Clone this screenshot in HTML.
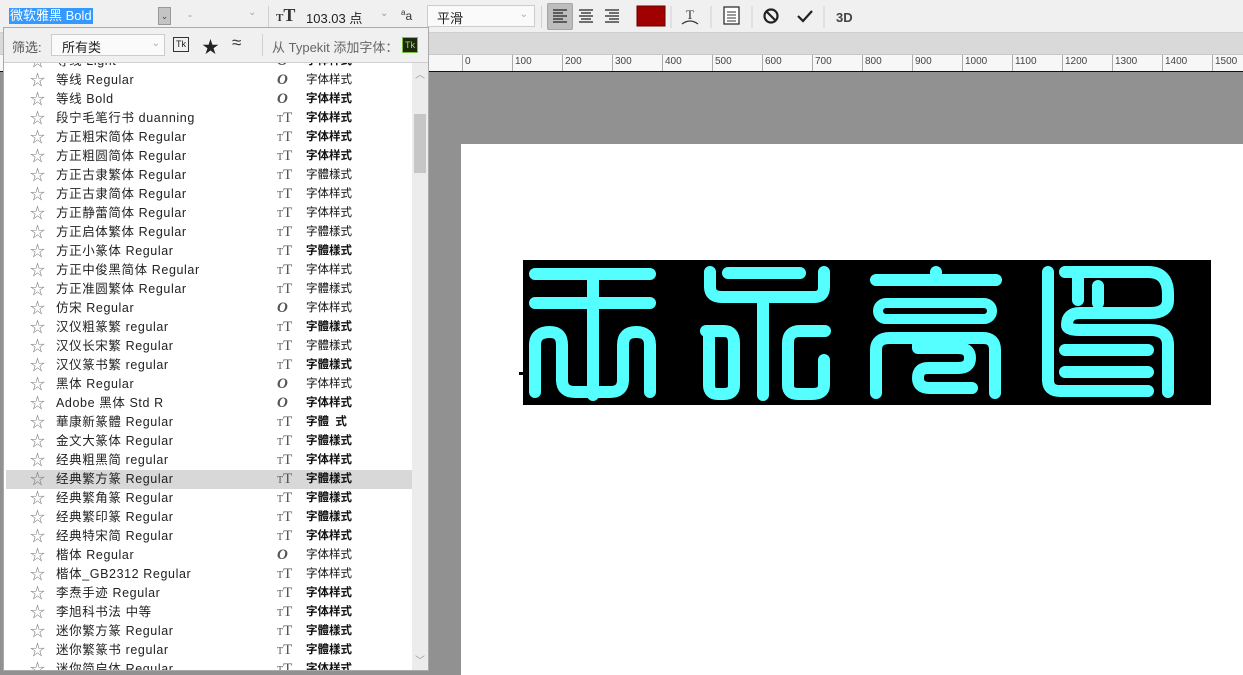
<!DOCTYPE html>
<html><head><meta charset="utf-8">
<style>
*{margin:0;padding:0;box-sizing:border-box}
body{width:1243px;height:675px;overflow:hidden;position:relative;background:#919191;font-family:"Liberation Sans","Noto Sans CJK SC",sans-serif;font-size:12px;color:#222}
.abs{position:absolute}
#tb{left:0;top:0;width:1243px;height:33px;background:#f0f0f0;border-bottom:1px solid #cfcfcf}
#band{left:0;top:33px;width:1243px;height:22px;background:#d9d9d9;border-bottom:1px solid #c8c8c8}
#ruler{left:0;top:55px;width:1243px;height:17px;background:#f7f7f7;border-bottom:1px solid #111}
.tick{position:absolute;top:0;width:1px;height:16px;background:#aaa}
.rl{position:absolute;top:1px;font-size:10px;color:#444}
#doc{left:461px;top:144px;width:782px;height:531px;background:#fff}
#panel{left:3px;top:27px;width:426px;height:644px;background:#fff;border:1px solid #aaa}
#filter{left:0;top:0;width:424px;height:35px;background:#f0f0f0;border-bottom:1px solid #d0d0d0}
#list{position:absolute;left:0;top:35px;width:424px;height:607px;overflow:hidden}
.row{position:relative;left:2px;width:406px;height:19px;line-height:19px;font-size:12.5px;color:#222}
.row .st{position:absolute;left:24px;top:0;color:#777;font-size:15px}
.row .nm{position:absolute;left:50px;top:0;white-space:nowrap;letter-spacing:0.6px}
.row .ic{position:absolute;left:271px;top:0;font-family:"Liberation Serif",serif;font-size:15px;color:#555}
.row .ic i{font-weight:bold}
.row .ic s{text-decoration:none;font-size:10px}
.row .sm{position:absolute;left:300px;top:0;font-size:11.5px;font-weight:bold;color:#111}
.sel{background:#d8d8d8}
</style></head><body>
<div id="tb" class="abs">
 <div class="abs" style="left:9px;top:8px;background:#3399ff;color:#fff;font-size:13px;line-height:16px;padding:0 1px">微软雅黑 Bold</div>
 <div class="abs" style="left:158px;top:7px;width:13px;height:18px;background:#c4c4c4;border:1px solid #999;font-size:9px;text-align:center;line-height:16px;color:#444">⌄</div>
 <div class="abs" style="left:188px;top:8px;color:#999">-</div>
 <div class="abs" style="left:248px;top:7px;color:#aaa;font-size:10px">⌄</div>
 <div class="abs" style="left:268px;top:6px;width:1px;height:22px;background:#d0d0d0"></div>
 <div class="abs" style="left:276px;top:5px;font-family:'Liberation Serif',serif;font-size:18px;font-weight:bold;color:#333"><span style="font-size:11px">T</span>T</div>
 <div class="abs" style="left:306px;top:8px;font-size:13px">103.03 点</div>
 <div class="abs" style="left:380px;top:8px;color:#999;font-size:10px">⌄</div>
 <div class="abs" style="left:401px;top:8px;font-size:12px;color:#333"><sup style="font-size:8px">a</sup>a</div>
 <div class="abs" style="left:427px;top:5px;width:108px;height:22px;background:#fafafa;border:1px solid #ccc;font-size:13px;padding:2px 0 0 9px">平滑<span style="position:absolute;right:6px;top:3px;color:#aaa;font-size:10px">⌄</span></div>
 <div class="abs" style="left:541px;top:6px;width:1px;height:22px;background:#d0d0d0"></div>
 <div class="abs" style="left:547px;top:3px;width:26px;height:27px;background:#bdbdbd;border:1px solid #a5a5a5;border-radius:2px"></div>
 <svg class="abs" style="left:0;top:0" width="1243" height="33">
  <g stroke="#222" stroke-width="1.2">
   <path d="M553 10h14M553 13h10M553 16h14M553 19h10M553 22h14"/>
   <path d="M579 10h14M581 13h10M579 16h14M581 19h10M579 22h14"/>
   <path d="M605 10h14M609 13h10M605 16h14M609 19h10M605 22h14"/>
  </g>
  <rect x="637" y="6" width="28" height="20" fill="#a00000" stroke="#600" />
  <line x1="671" y1="6" x2="671" y2="28" stroke="#d0d0d0"/>
  <text x="686" y="19" font-family="Liberation Serif" font-size="13" fill="#333">T</text>
  <path d="M682 24 q8 -6 16 0" stroke="#333" fill="none" stroke-width="1.2"/>
  <line x1="711" y1="6" x2="711" y2="28" stroke="#d0d0d0"/>
  <rect x="724" y="7" width="15" height="17" fill="#fff" stroke="#333" stroke-width="1.3"/>
  <path d="M727 12h9M727 15h9M727 18h9M727 21h9" stroke="#333"/>
  <line x1="752" y1="6" x2="752" y2="28" stroke="#d0d0d0"/>
  <circle cx="771" cy="16" r="6.5" fill="none" stroke="#222" stroke-width="2.2"/>
  <path d="M766 11l10 10" stroke="#222" stroke-width="2.2"/>
  <path d="M798 16l5 5 9-10" stroke="#222" stroke-width="2.2" fill="none"/>
  <line x1="824" y1="6" x2="824" y2="28" stroke="#d0d0d0"/>
  <text x="836" y="22" font-family="Liberation Sans" font-weight="bold" font-size="13" fill="#444">3D</text>
 </svg>
</div>
<div id="band" class="abs"></div>
<div id="ruler" class="abs">
 <div class="tick" style="left:462px"></div><div class="rl" style="left:465px">0</div>
 <div class="tick" style="left:512px"></div><div class="rl" style="left:515px">100</div>
 <div class="tick" style="left:562px"></div><div class="rl" style="left:565px">200</div>
 <div class="tick" style="left:612px"></div><div class="rl" style="left:615px">300</div>
 <div class="tick" style="left:662px"></div><div class="rl" style="left:665px">400</div>
 <div class="tick" style="left:712px"></div><div class="rl" style="left:715px">500</div>
 <div class="tick" style="left:762px"></div><div class="rl" style="left:765px">600</div>
 <div class="tick" style="left:812px"></div><div class="rl" style="left:815px">700</div>
 <div class="tick" style="left:862px"></div><div class="rl" style="left:865px">800</div>
 <div class="tick" style="left:912px"></div><div class="rl" style="left:915px">900</div>
 <div class="tick" style="left:962px"></div><div class="rl" style="left:965px">1000</div>
 <div class="tick" style="left:1012px"></div><div class="rl" style="left:1015px">1100</div>
 <div class="tick" style="left:1062px"></div><div class="rl" style="left:1065px">1200</div>
 <div class="tick" style="left:1112px"></div><div class="rl" style="left:1115px">1300</div>
 <div class="tick" style="left:1162px"></div><div class="rl" style="left:1165px">1400</div>
 <div class="tick" style="left:1212px"></div><div class="rl" style="left:1215px">1500</div>
</div>
<div id="doc" class="abs"></div>
<svg class="abs" style="left:0;top:0" width="1243" height="675">
 <rect x="523" y="260" width="688" height="145" fill="#000"/>
 <rect x="519" y="372" width="4" height="3" fill="#000"/>
 <g stroke="#55ffff" stroke-width="12" stroke-linecap="round" stroke-linejoin="round" fill="none">
  <path d="M535 274H650M535 303H650M593 274V330"/>
  <path d="M535 392V345Q535 332 550 332Q562 332 562 345V380Q562 392 575 392H610Q623 392 623 380V345Q623 332 636 332Q650 332 650 345V392"/>
  <path d="M593 332V395"/>
  <path d="M710 272V287Q710 297 722 297H814Q824 297 824 287V272M728 273H800M763 297V395"/>
  <path d="M706 331H724Q734 331 734 343V385Q734 394 724 394H718Q709 394 709 385V331"/>
  <path d="M825 331H800Q788 331 788 343V385Q788 394 798 394H812Q824 394 824 385V360"/>
  <path d="M876 280H996M936 272V280"/>
  <path d="M876 393V350Q876 338 890 338H983Q995 338 995 350V393"/>
  <path d="M918 338V348H958Q970 348 970 358Q970 368 958 368H928Q918 368 918 378Q918 388 930 388H972"/>
  <path d="M1048 272V380Q1048 391 1060 391H1148"/>
  <path d="M1065 272H1148Q1168 272 1168 294V300Q1168 313 1150 313H1080Q1067 313 1067 325Q1067 330 1080 330H1150Q1168 330 1168 345V392"/>
  <path d="M1078 272V300M1098 286V303M1065 350H1148M1065 372H1148"/>
 </g>
 <rect x="878" y="303" width="114" height="16" rx="8" fill="none" stroke="#55ffff" stroke-width="10"/>
 <path d="M328 488l12 8-6 2 4 6-3 1-3-6-4 4z" fill="#4a90d9" stroke="#fff" stroke-width="0.5"/>
</svg>

<div id="panel" class="abs">
 <div id="filter" class="abs">
  <div class="abs" style="left:8px;top:9px;font-size:13px;color:#555">筛选:</div>
  <div class="abs" style="left:47px;top:6px;width:114px;height:22px;background:#fafafa;border:1px solid #ccc;font-size:13px;padding:2px 0 0 10px">所有类<span style="position:absolute;right:4px;top:3px;color:#aaa;font-size:10px">⌄</span></div>
  <div class="abs" style="left:169px;top:9px;width:16px;height:15px;border:1px solid #333;font-size:9px;line-height:13px;text-align:center;color:#222">Tk</div>
  <div class="abs" style="left:198px;top:5px;font-size:17px;color:#222">★</div>
  <div class="abs" style="left:228px;top:5px;font-size:17px;color:#333">≈</div>
  <div class="abs" style="left:258px;top:6px;width:1px;height:22px;background:#d0d0d0"></div>
  <div class="abs" style="left:268px;top:9px;font-size:13px;color:#666">从 Typekit 添加字体：</div>
  <div class="abs" style="left:398px;top:9px;width:16px;height:16px;background:#1a2a0a;border:1px solid #7bc142;font-size:9px;line-height:14px;text-align:center;color:#9be05a">Tk</div>
 </div>
 <div id="list"><div style="margin-top:-11px">
<div class="row"><span class="st">☆</span><span class="nm">等线 Light</span><span class="ic"><i>O</i></span><span class="sm">字体样式</span></div>
<div class="row"><span class="st">☆</span><span class="nm">等线 Regular</span><span class="ic"><i>O</i></span><span class="sm" style="font-weight:normal">字体样式</span></div>
<div class="row"><span class="st">☆</span><span class="nm">等线 Bold</span><span class="ic"><i>O</i></span><span class="sm">字体样式</span></div>
<div class="row"><span class="st">☆</span><span class="nm">段宁毛笔行书 duanning</span><span class="ic"><s>T</s>T</span><span class="sm">字体样式</span></div>
<div class="row"><span class="st">☆</span><span class="nm">方正粗宋简体 Regular</span><span class="ic"><s>T</s>T</span><span class="sm">字体样式</span></div>
<div class="row"><span class="st">☆</span><span class="nm">方正粗圆简体 Regular</span><span class="ic"><s>T</s>T</span><span class="sm">字体样式</span></div>
<div class="row"><span class="st">☆</span><span class="nm">方正古隶繁体 Regular</span><span class="ic"><s>T</s>T</span><span class="sm" style="font-weight:normal">字體樣式</span></div>
<div class="row"><span class="st">☆</span><span class="nm">方正古隶简体 Regular</span><span class="ic"><s>T</s>T</span><span class="sm" style="font-weight:normal">字体样式</span></div>
<div class="row"><span class="st">☆</span><span class="nm">方正静蕾简体 Regular</span><span class="ic"><s>T</s>T</span><span class="sm" style="font-weight:normal">字体样式</span></div>
<div class="row"><span class="st">☆</span><span class="nm">方正启体繁体 Regular</span><span class="ic"><s>T</s>T</span><span class="sm" style="font-weight:normal">字體樣式</span></div>
<div class="row"><span class="st">☆</span><span class="nm">方正小篆体 Regular</span><span class="ic"><s>T</s>T</span><span class="sm">字體樣式</span></div>
<div class="row"><span class="st">☆</span><span class="nm">方正中俊黑简体 Regular</span><span class="ic"><s>T</s>T</span><span class="sm" style="font-weight:normal">字体样式</span></div>
<div class="row"><span class="st">☆</span><span class="nm">方正准圆繁体 Regular</span><span class="ic"><s>T</s>T</span><span class="sm" style="font-weight:normal">字體樣式</span></div>
<div class="row"><span class="st">☆</span><span class="nm">仿宋 Regular</span><span class="ic"><i>O</i></span><span class="sm" style="font-weight:normal">字体样式</span></div>
<div class="row"><span class="st">☆</span><span class="nm">汉仪粗篆繁 regular</span><span class="ic"><s>T</s>T</span><span class="sm">字體樣式</span></div>
<div class="row"><span class="st">☆</span><span class="nm">汉仪长宋繁 Regular</span><span class="ic"><s>T</s>T</span><span class="sm" style="font-weight:normal">字體樣式</span></div>
<div class="row"><span class="st">☆</span><span class="nm">汉仪篆书繁 regular</span><span class="ic"><s>T</s>T</span><span class="sm">字體樣式</span></div>
<div class="row"><span class="st">☆</span><span class="nm">黑体 Regular</span><span class="ic"><i>O</i></span><span class="sm" style="font-weight:normal">字体样式</span></div>
<div class="row"><span class="st">☆</span><span class="nm">Adobe 黑体 Std R</span><span class="ic"><i>O</i></span><span class="sm">字体样式</span></div>
<div class="row"><span class="st">☆</span><span class="nm">華康新篆體 Regular</span><span class="ic"><s>T</s>T</span><span class="sm">字體&nbsp;&nbsp;式</span></div>
<div class="row"><span class="st">☆</span><span class="nm">金文大篆体 Regular</span><span class="ic"><s>T</s>T</span><span class="sm">字體樣式</span></div>
<div class="row"><span class="st">☆</span><span class="nm">经典粗黑简 regular</span><span class="ic"><s>T</s>T</span><span class="sm">字体样式</span></div>
<div class="row sel"><span class="st">☆</span><span class="nm">经典繁方篆 Regular</span><span class="ic"><s>T</s>T</span><span class="sm">字體樣式</span></div>
<div class="row"><span class="st">☆</span><span class="nm">经典繁角篆 Regular</span><span class="ic"><s>T</s>T</span><span class="sm">字體樣式</span></div>
<div class="row"><span class="st">☆</span><span class="nm">经典繁印篆 Regular</span><span class="ic"><s>T</s>T</span><span class="sm">字體樣式</span></div>
<div class="row"><span class="st">☆</span><span class="nm">经典特宋简 Regular</span><span class="ic"><s>T</s>T</span><span class="sm">字体样式</span></div>
<div class="row"><span class="st">☆</span><span class="nm">楷体 Regular</span><span class="ic"><i>O</i></span><span class="sm" style="font-weight:normal">字体样式</span></div>
<div class="row"><span class="st">☆</span><span class="nm">楷体_GB2312 Regular</span><span class="ic"><s>T</s>T</span><span class="sm" style="font-weight:normal">字体样式</span></div>
<div class="row"><span class="st">☆</span><span class="nm">李焘手迹 Regular</span><span class="ic"><s>T</s>T</span><span class="sm">字体样式</span></div>
<div class="row"><span class="st">☆</span><span class="nm">李旭科书法 中等</span><span class="ic"><s>T</s>T</span><span class="sm">字体样式</span></div>
<div class="row"><span class="st">☆</span><span class="nm">迷你繁方篆 Regular</span><span class="ic"><s>T</s>T</span><span class="sm">字體樣式</span></div>
<div class="row"><span class="st">☆</span><span class="nm">迷你繁篆书 regular</span><span class="ic"><s>T</s>T</span><span class="sm">字體樣式</span></div>
<div class="row"><span class="st">☆</span><span class="nm">迷你简启体 Regular</span><span class="ic"><s>T</s>T</span><span class="sm">字体样式</span></div>
 </div></div>
 <div class="abs" style="left:408px;top:35px;width:16px;height:607px;background:#ececec"></div>
 <div class="abs" style="left:410px;top:86px;width:12px;height:59px;background:#c6c6c6"></div>
 <div class="abs" style="left:411px;top:38px;color:#999;font-size:10px">︿</div>
 <div class="abs" style="left:411px;top:624px;color:#999;font-size:10px">﹀</div>
</div>
</body></html>
